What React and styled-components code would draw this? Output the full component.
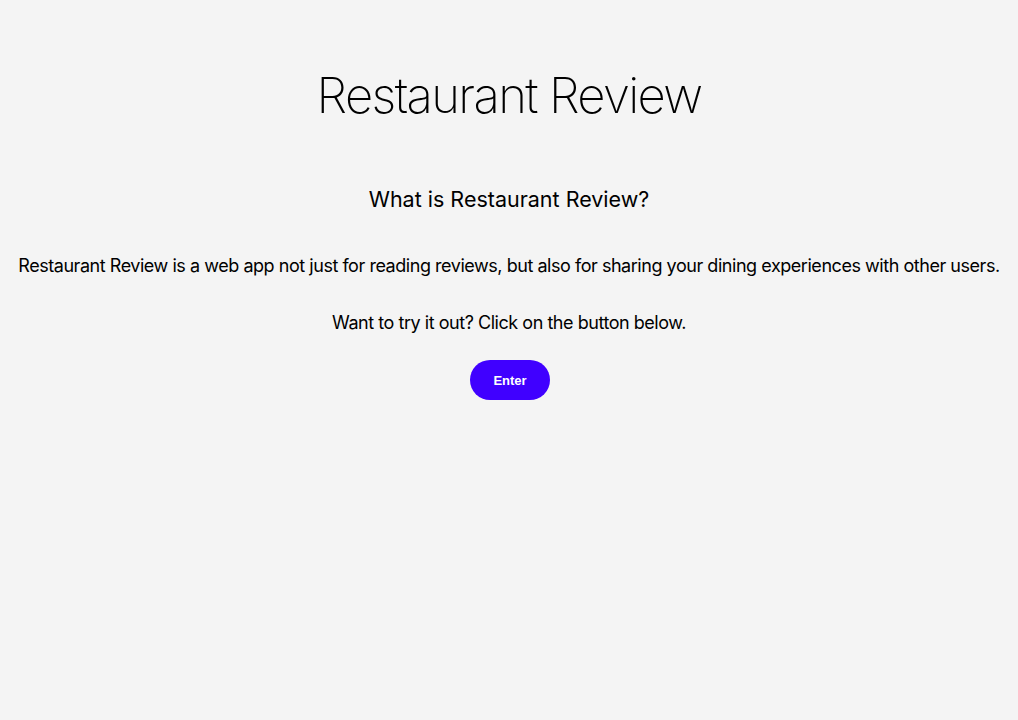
import React from 'react';
import styled, { createGlobalStyle } from 'styled-components';

const GlobalStyle = createGlobalStyle`
  body {
    margin: 0;
    background: #f4f4f4;
    font-family: Inter, "Noto Sans", sans-serif;
    color: #000;
  }
`;

const Page = styled.main`
  display: flex;
  flex-flow: column nowrap;
  align-items: center;
  padding-top: 64px;
  text-align: center;
`;

const Title = styled.h1`
  margin: 0;
  font-size: 49px;
  font-weight: 200;
  line-height: 64px;
  letter-spacing: -1.65px;
`;

const Subtitle = styled.h2`
  margin: 57px 0 0;
  font-size: 21.5px;
  font-weight: 400;
  line-height: 28px;
`;

const Text = styled.p`
  margin: ${(p) => p.top || '28px'} 0 0;
  font-size: 18px;
  line-height: 24px;
  letter-spacing: -0.46px;
`;

const Button = styled.button`
  margin-top: 25px;
  margin-left: 2px;
  width: 80px;
  height: 40px;
  border: none;
  border-radius: 20px;
  background: #4000ff;
  color: #fff;
  font-family: "Liberation Sans", Arial, sans-serif;
  font-size: 13px;
  font-weight: bold;
  cursor: pointer;
`;

const App = () => (
  <>
    <GlobalStyle />
    <Page>
      <Title>Restaurant Review</Title>
      <Subtitle>What is Restaurant Review?</Subtitle>
      <Text top="41px">
        Restaurant Review is a web app not just for reading reviews, but also for sharing your dining experiences with other users.
      </Text>
      <Text top="33px">Want to try it out? Click on the button below.</Text>
      <Button>Enter</Button>
    </Page>
  </>
);

export default App;
